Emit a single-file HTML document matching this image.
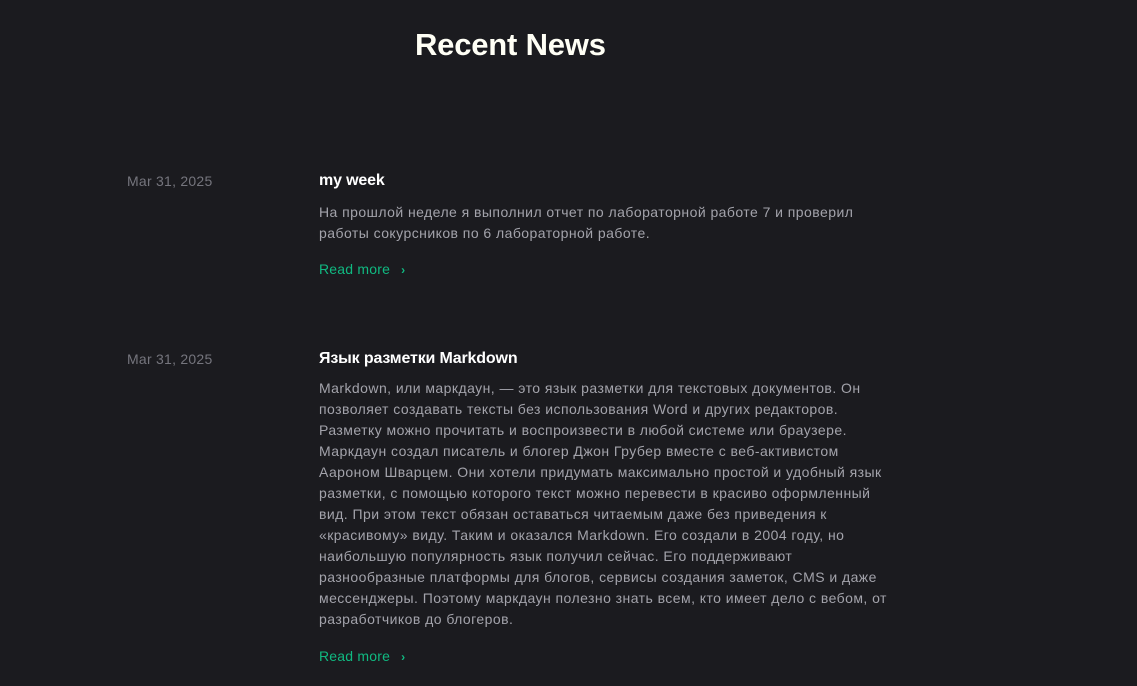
<!DOCTYPE html>
<html><head><meta charset="utf-8"><style>
html,body{margin:0;padding:0;background:#1b1b1f;width:1137px;height:686px;overflow:hidden;font-family:"Liberation Sans",sans-serif;}
h1{position:absolute;left:415px;top:25px;margin:0;font-size:31px;line-height:40px;color:#fffff5;font-weight:700;letter-spacing:-0.2px}
.date{position:absolute;left:127px;font-size:14px;color:#75757d;line-height:20px;letter-spacing:0.25px}
.t{position:absolute;left:319px;font-size:16px;font-weight:700;color:#ffffff;line-height:22px;letter-spacing:-0.15px}
.p{position:absolute;left:319px;font-size:14px;color:#a3a3ab;line-height:21px;white-space:nowrap;letter-spacing:0.45px}
.r{position:absolute;left:319px;font-size:14px;color:#10b981;line-height:20px;letter-spacing:0.2px}
.r span{font-size:12px;margin-left:11px;font-weight:700}
</style></head><body>
<h1>Recent News</h1>
<div class="date" style="top:171px">Mar 31, 2025</div>
<div class="t" style="top:170px">my week</div>
<div class="p" style="top:202px">На прошлой неделе я выполнил отчет по лабораторной работе 7 и проверил<br>работы сокурсников по 6 лабораторной работе.</div>
<div class="r" style="top:259px">Read more<span>›</span></div>
<div class="date" style="top:349px">Mar 31, 2025</div>
<div class="t" style="top:348px">Язык разметки Markdown</div>
<div class="p" style="top:378px">Markdown, или маркдаун, — это язык разметки для текстовых документов. Он<br>позволяет создавать тексты без использования Word и других редакторов.<br>Разметку можно прочитать и воспроизвести в любой системе или браузере.<br>Маркдаун создал писатель и блогер Джон Грубер вместе с веб-активистом<br>Аароном Шварцем. Они хотели придумать максимально простой и удобный язык<br>разметки, с помощью которого текст можно перевести в красиво оформленный<br>вид. При этом текст обязан оставаться читаемым даже без приведения к<br>«красивому» виду. Таким и оказался Markdown. Его создали в 2004 году, но<br>наибольшую популярность язык получил сейчас. Его поддерживают<br>разнообразные платформы для блогов, сервисы создания заметок, CMS и даже<br>мессенджеры. Поэтому маркдаун полезно знать всем, кто имеет дело с вебом, от<br>разработчиков до блогеров.</div>
<div class="r" style="top:646px">Read more<span>›</span></div>
</body></html>
